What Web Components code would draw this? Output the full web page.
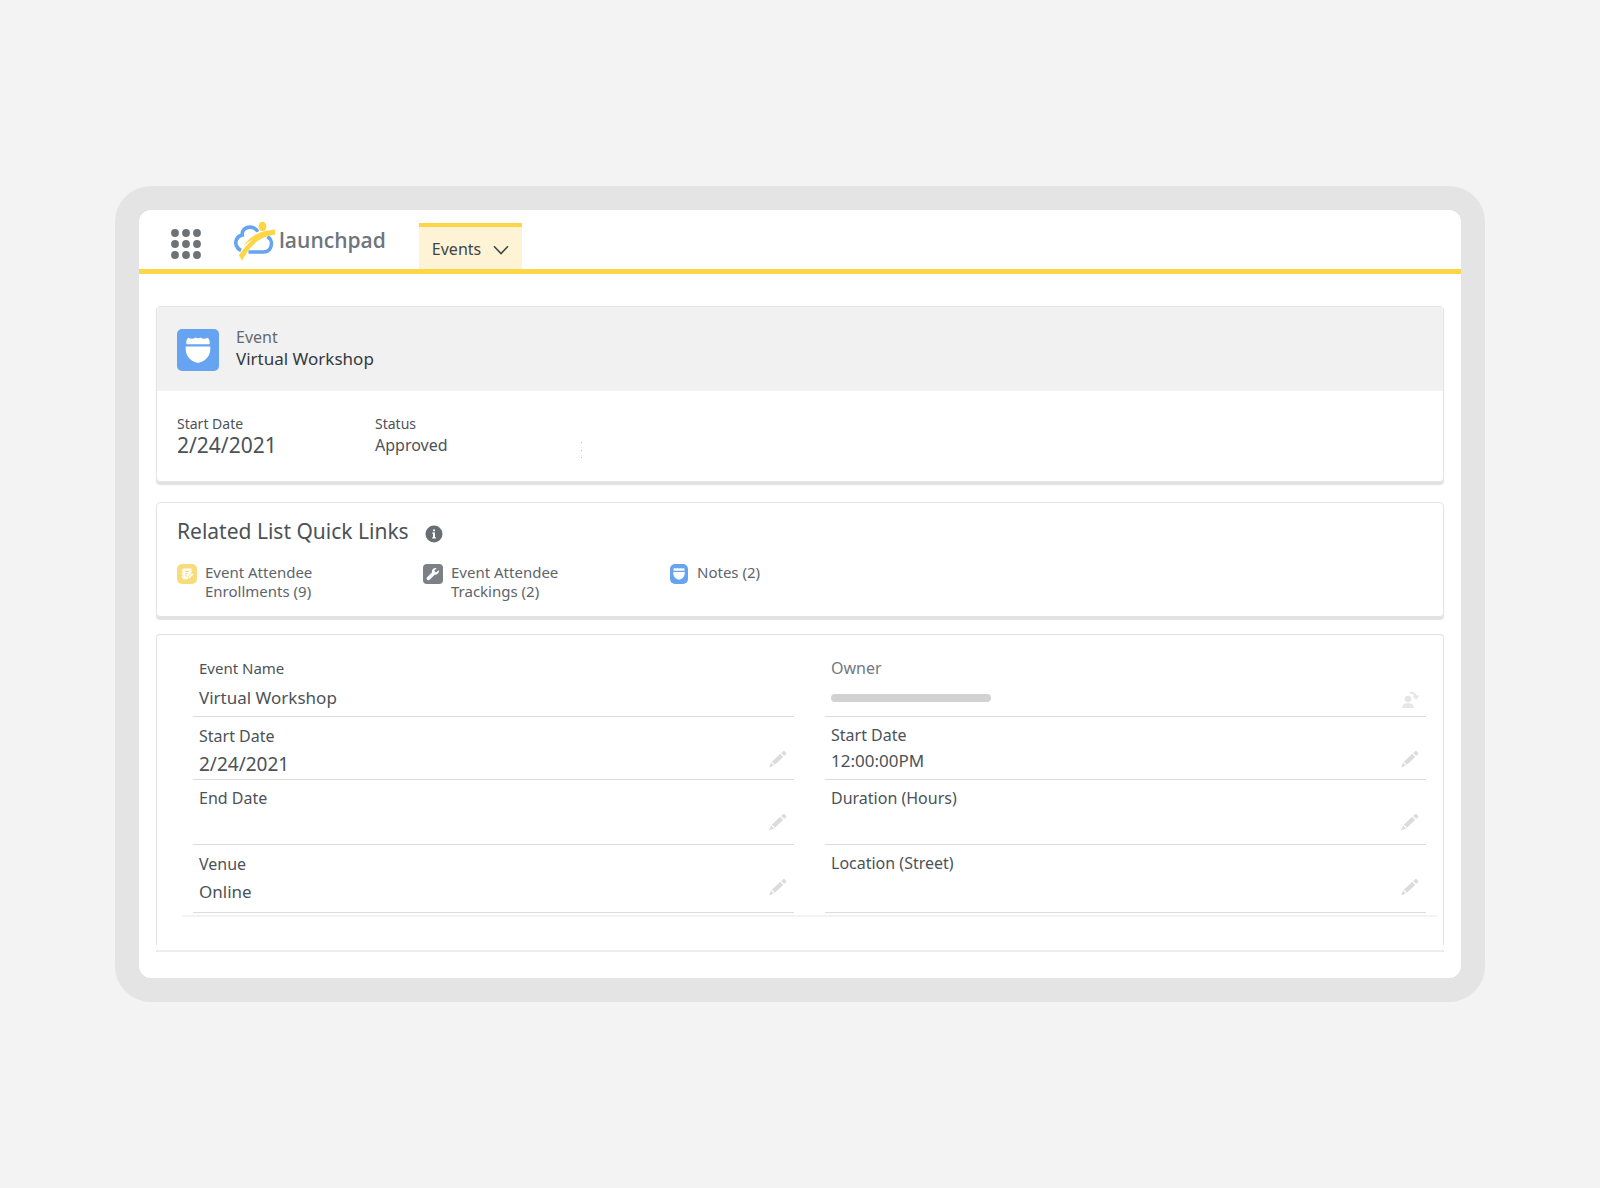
<!DOCTYPE html>
<html lang="en">
<head>
<meta charset="utf-8">
<title>Virtual Workshop | launchpad</title>
<style>
  html { background: #f3f3f3; }
  body { margin: 0; font-family: "Noto Sans", "Open Sans", sans-serif; color: #4c5258; }
</style>
</head>
<body>
<launchpad-app></launchpad-app>
<script>
const define = (name, html, setup) => {
  const template = document.createElement('template');
  template.innerHTML = html;
  customElements.define(name, class extends HTMLElement {
    constructor() {
      super();
      this.attachShadow({ mode: 'open' }).append(template.content.cloneNode(true));
    }
    connectedCallback() { if (setup) setup(this, this.shadowRoot); }
  });
};

const icons = {
  shield: '<svg viewBox="0 0 42 42"><rect width="42" height="42" rx="5" fill="#66a3f0"/><path fill="#fff" d="M9.500 15.200C8.800 12.500 9.500 10.500 11.300 8.800c2.800 1.500 5.200 1.300 7-.2 1.700 1 3.700 1 5.400 0 1.800 1.500 4.200 1.700 7 .2 1.800 1.700 2.500 3.700 1.800 6.400zM8.700 17.400h24.600C34 25.500 30 31.600 21 34 12 31.600 8 25.500 8.700 17.400z"/></svg>',
  'shield-small': '<svg viewBox="0 0 20 20"><rect x="1" width="18" height="20" rx="5" fill="#66a3f0"/><path fill="#fff" d="M4.500 6.800c-.2-1.200 0-2 .8-2.700 1.300.7 2.200.6 3-.1.900.6 2.200.6 3.200 0 .9.700 2 .8 3.200.1.800.7 1 1.500.8 2.700zM4.300 8h11.400c.3 4-1.700 6.700-5.700 7.800C6 14.700 4 12 4.300 8z"/></svg>',
  enroll: '<svg viewBox="0 0 20 20"><rect width="20" height="20" rx="5" fill="#f8dc7c"/><path fill="#fffdf5" d="M6.500 4.500h7a1 1 0 0 1 1 1v3.200l-3.600 3.700v2.900H6.500a1 1 0 0 1-1-1v-1.100h-.8v-1h.8V10h-.8V9h.8V7.200h-.8v-1h.8v-.7a1 1 0 0 1 1-1z"/><path fill="#fffdf5" d="m15 9.200 1.300 1.300-3.500 3.600-1.700.4.400-1.700z"/><path stroke="#f8dc7c" d="M8 7.500h4.500M8 9.800h3M8 12h2"/></svg>',
  wrench: '<svg viewBox="0 0 20 20"><rect width="20" height="20" rx="4" fill="#7b8186"/><path fill="#fff" d="M15.700 6.100 13.500 8.300 11.900 7.900 11.500 6.400 13.700 4.200C11.900 3.500 9.900 4.300 9.200 6c-.3.800-.3 1.500-.1 2.200l-5 5a1.700 1.700 0 0 0 2.500 2.500l5.100-5c2.400.6 4.900-1.800 4-4.600z"/></svg>',
  pencil: '<svg viewBox="0 0 18 18" fill="#dcdcdc"><path d="M2.900 11.600 11.200 3.800 14.200 6.900 5.900 14.800zM12.200 2.900 14.100 1.200c.5-.4 1-.4 1.400 0l1.600 1.600c.4.5.4.900 0 1.400L15.200 6zM2.100 12.500 4.900 15.600.8 17.200C.4 17.300.2 17 .3 16.700z"/></svg>',
  owner: '<svg viewBox="0 0 18 18" fill="#e6e6e6"><circle cx="7" cy="8" r="3.200"/><path d="M1 17c0-3 2-4.300 4.500-4.700h3C11 12.700 13 14 13 17z"/><path fill="none" stroke="#e6e6e6" stroke-width="2" d="M8.800 1.800c3.600-.4 5.700 1.300 6.300 4.700M12.300 5.200l2.900 2 2-2.700"/></svg>'
};

define('app-icon', `
  <style>
    :host { display: block; flex: none; width: 20px; height: 20px; }
    svg { display: block; width: 100%; height: 100%; }
  </style>`,
  (el, root) => {
    const icon = icons[el.getAttribute('name')];
    if (icon && !root.querySelector('svg')) root.innerHTML += icon;
  });

define('app-header', `
  <style>
    :host { display: flex; align-items: stretch; height: 59px; padding-left: 32px; border-bottom: 5px solid #fed544; }
    button { font: inherit; color: inherit; border: 0; background: none; padding: 0; }
    .launcher { display: block; align-self: center; }
    .launcher svg { display: block; width: 30px; height: 30px; margin-top: 8px; }
    .logo { display: flex; align-items: center; gap: 3px; margin: 0 33px; color: #6f767b; text-decoration: none; font-size: 21px; line-height: 30px; font-weight: 600; font-family: "Open Sans", "Noto Sans", sans-serif; }
    .logo svg { width: 42px; height: 40px; margin-top: 3px; }
    .tab { display: flex; align-items: center; gap: 12px; align-self: flex-end; height: 46px; box-sizing: border-box; padding: 2px 13px 0 13px; border-top: 4px solid #fed544; background: #fef4d5; color: #3f454b; font-size: 16px; line-height: 24px; }
    .tab svg { width: 16px; height: 10px; margin-top: 2px; }
  </style>
  <button class="launcher" aria-label="App launcher">
    <svg viewBox="0 0 30 30" fill="#6c7276"><circle cx="4" cy="4" r="3.900"/><circle cx="15" cy="4" r="3.900"/><circle cx="26" cy="4" r="3.900"/><circle cx="4" cy="15" r="3.900"/><circle cx="15" cy="15" r="3.900"/><circle cx="26" cy="15" r="3.900"/><circle cx="4" cy="26" r="3.900"/><circle cx="15" cy="26" r="3.900"/><circle cx="26" cy="26" r="3.900"/></svg>
  </button>
  <a class="logo" href="#">
    <svg viewBox="0 0 42 40" aria-hidden="true">
      <path fill="none" stroke="#66a3f0" stroke-width="3.600" d="M7 29.500C2.500 27.500.8 22.500 2.500 18.500 3.600 15.800 5.500 14.500 8.300 14 7.500 10 11 6.100 16 6.100c3.500 0 6.200 1.500 7.800 4.700M33.500 15.500c4 2.800 4.800 7.500 3 11.200-1.400 2.900-4 4.300-7.500 4.300H14.500"/>
      <ellipse cx="28.500" cy="5.500" rx="3.900" ry="4.800" fill="#fed544"/>
      <path fill="#fed544" d="M41 8.500v5.300C28 15 16.500 22.500 8.300 39.600L5 34.800C7.800 29.500 13 23 19.500 18.300 15.500 20 12 22.500 9.300 25.300 15 16.500 23 10.300 41 8.500z"/>
    </svg>
    <span>launchpad</span>
  </a>
  <button class="tab">Events
    <svg viewBox="0 0 16 10" fill="none" stroke="#3f454b" stroke-width="1.600"><path d="m1 1.200 7 7.300 7-7.300"/></svg>
  </button>`);

define('record-card', `
  <style>
    :host { display: block; border: 1px solid #e4e4e4; border-radius: 4px; background: #fff; box-shadow: 0 3px 1px #e2e2e2; }
  </style>
  <slot></slot>`);

define('record-title', `
  <style>
    :host { display: flex; align-items: center; gap: 17px; height: 84px; padding: 0 20px; background: #f1f1f1; }
    app-icon { width: 42px; height: 42px; margin-top: 2px; }
    div { margin-bottom: 2px; }
    p, h1 { margin: 0; font-size: 17px; line-height: 22px; font-weight: 400; }
    p { color: #646a70; font-size: 16px; }
    h1 { color: #34393e; }
  </style>
  <app-icon name="shield"></app-icon>
  <div><p><slot name="type"></slot></p><h1><slot></slot></h1></div>`);

define('record-summary', `
  <style>
    :host { display: flex; height: 65px; padding: 23px 20px 2px; }
    dl { margin: 0; width: 198px; }
    dt { font-size: 14px; line-height: 20px; }
    dd { margin: 0; font-size: 16px; line-height: 22px; }
    dd.date { font-size: 21px; }
    svg { width: 4px; height: 16px; margin: 28px 7px; }
  </style>
  <dl><dt>Start Date</dt><dd class="date">2/24/2021</dd></dl>
  <dl><dt>Status</dt><dd>Approved</dd></dl>
  <svg viewBox="0 0 4 16" fill="#b8b8b8" aria-hidden="true"><path d="M1 0h1v1H1zM1 8h1v1H1zM1 15h1v1H1z"/></svg>`);

define('quick-link', `
  <style>
    :host { display: block; width: 246px; }
    a { display: flex; gap: 8px; color: #5d646a; text-decoration: none; font-size: 15px; line-height: 19px; }
    app-icon { margin-top: 1px; }
    span { max-width: 112px; }
  </style>
  <a href="#"><span><slot></slot></span></a>`,
  (el, root) => {
    if (root.querySelector('app-icon')) return;
    const icon = document.createElement('app-icon');
    icon.setAttribute('name', el.getAttribute('icon'));
    root.querySelector('a').prepend(icon);
  });

define('quick-links', `
  <style>
    :host { display: block; padding: 14px 20px 15px; }
    header { display: flex; align-items: center; gap: 16px; }
    h2 { margin: 0; font-size: 21px; line-height: 28px; font-weight: 400; }
    button { border: 0; padding: 0; background: none; }
    svg { display: block; width: 18px; height: 18px; margin-top: 6px; }
    nav { display: flex; margin-top: 18px; }
  </style>
  <header><h2>Related List Quick Links</h2>
    <button aria-label="More information"><svg viewBox="0 0 18 18"><circle cx="9" cy="9" r="8.500" fill="#696e72"/><path fill="#fff" d="M8 4.500h2v1.800H8zM7.200 7.500H10v4.700h.9v1.300H7.200v-1.300H8V8.800h-.8z"/></svg></button>
  </header>
  <nav>
    <quick-link icon="enroll">Event Attendee Enrollments (9)</quick-link>
    <quick-link icon="wrench">Event Attendee Trackings (2)</quick-link>
    <quick-link icon="shield-small">Notes (2)</quick-link>
  </nav>`);

define('record-field', `
  <style>
    :host { display: flex; justify-content: space-between; padding: 5px 7px 0 6px; border-bottom: 1px solid #dcdcdc; font-size: 16px; line-height: 28px; }
    :host([tight]) { line-height: 26px; }
    :host([first]) { padding-top: 18px; line-height: 30px; }
    :host([small]) .label { font-size: 15px; }
    :host([muted]) .label { color: #73797f; }
    dl, dd { margin: 0; }
    dd { font-size: 17px; }
    button { display: block; align-self: flex-start; border: 0; padding: 0; margin: 28px 0 0; background: none; }
    :host([first]) button { margin-top: 38px; }
    app-icon { width: 18px; height: 18px; }
  </style>
  <dl><dt class="label"></dt><dd><slot></slot></dd></dl>`,
  (el, root) => {
    root.querySelector('.label').textContent = el.getAttribute('label');
    const name = el.getAttribute('action');
    if (name && !root.querySelector('button')) {
      const button = document.createElement('button');
      button.setAttribute('aria-label', (name === 'owner' ? 'Change ' : 'Edit ') + el.getAttribute('label'));
      button.innerHTML = '<app-icon name="' + name + '"></app-icon>';
      root.append(button);
    }
  });

define('record-details', `
  <style>
    :host { display: block; padding-bottom: 5px; border-bottom: 2px solid #ededed; }
    .panel { border: solid #e2e2e2; border-width: 1px 1px 0; border-radius: 4px 4px 0 0; padding-bottom: 28px; }
    .fields { display: grid; grid-template-columns: 1fr 1fr; grid-template-rows: 82px 63px 65px 68px; column-gap: 31px; padding: 0 17px 0 36px; }
    .rule { margin: 2px 6px 0 25px; border: 0; border-top: 2px solid #f3f3f3; }
    .redacted { display: block; width: 160px; height: 8px; margin-top: 11px; border-radius: 4px; background: #d2d2d2; }
    .date { font-size: 19px; }
  </style>
  <div class="panel">
    <div class="fields">
      <record-field first small label="Event Name">Virtual Workshop</record-field>
      <record-field first muted label="Owner" action="owner"><span class="redacted"></span></record-field>
      <record-field label="Start Date" action="pencil"><span class="date">2/24/2021</span></record-field>
      <record-field tight label="Start Date" action="pencil">12:00:00PM</record-field>
      <record-field tight label="End Date" action="pencil"></record-field>
      <record-field tight label="Duration (Hours)" action="pencil"></record-field>
      <record-field label="Venue" action="pencil">Online</record-field>
      <record-field tight label="Location (Street)" action="pencil"></record-field>
    </div>
    <hr class="rule">
  </div>`);

define('launchpad-app', `
  <style>
    :host { display: block; padding: 186px 115px; }
    .frame { border: 24px solid #e4e4e4; border-radius: 36px; background: #e4e4e4; }
    .screen { border-radius: 12px; background: #fff; overflow: hidden; }
    main { display: flex; flex-direction: column; gap: 17px; padding: 32px 17px 26px; }
    .summary { margin-bottom: 3px; }
  </style>
  <div class="frame"><div class="screen">
    <app-header></app-header>
    <main>
      <record-card class="summary">
        <record-title><span slot="type">Event</span>Virtual Workshop</record-title>
        <record-summary></record-summary>
      </record-card>
      <record-card><quick-links></quick-links></record-card>
      <record-details></record-details>
    </main>
  </div></div>`);
</script>
</body>
</html>
